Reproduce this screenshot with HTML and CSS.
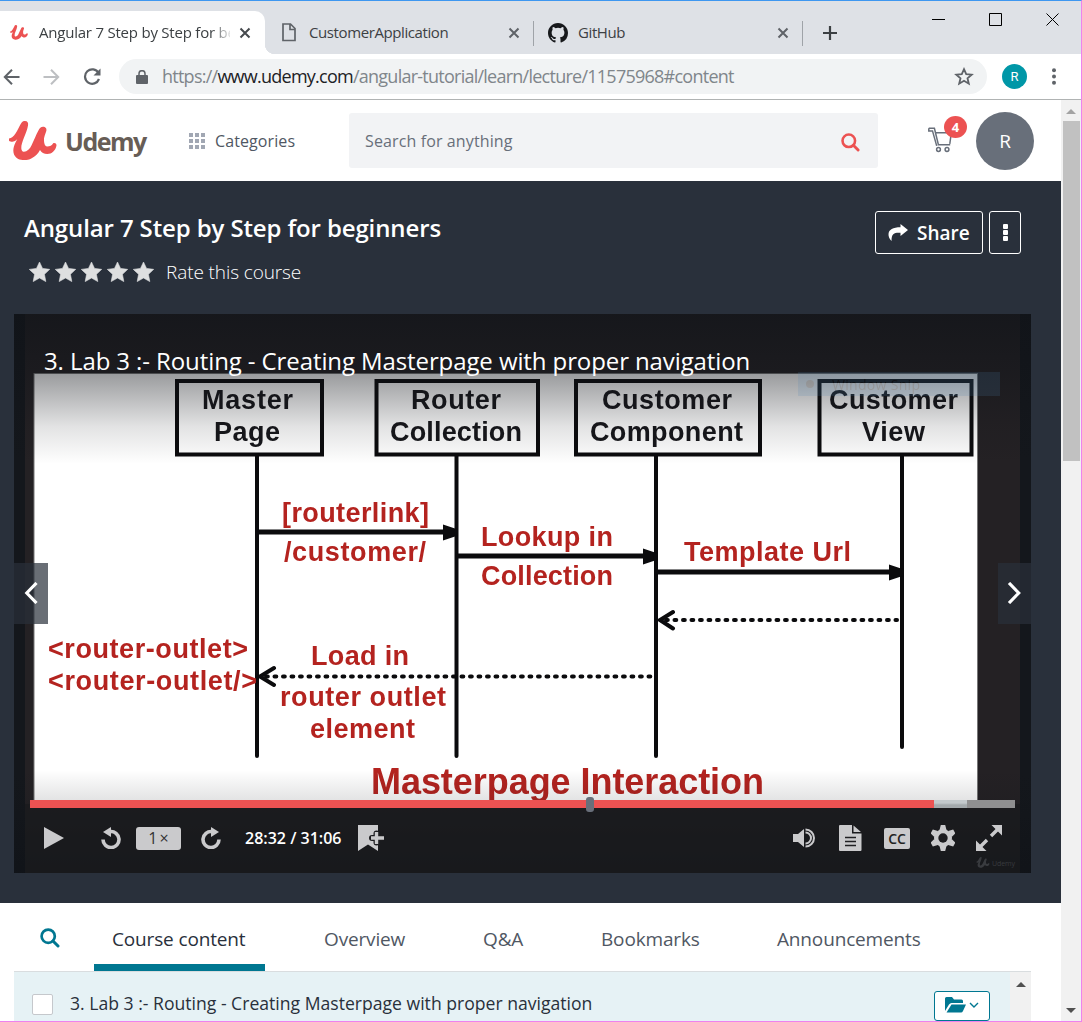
FILE: index.html
```html
<!DOCTYPE html>
<html lang="en">
<head>
<meta charset="utf-8">
<title>Angular 7 Step by Step for beginners</title>
<link rel="stylesheet" href="styles.css">
</head>
<body>
<svg class="defs" width="0" height="0">
  <symbol id="u-mark" viewBox="0 0 48 40">
    <path d="M0 17.500C5 17.500 8.500 9 11.700 3C13 .5 14.500 0 16 0C18.500 0 19.500 2 19 4.500C18 12 12 21 12.300 27.300C12.500 29.500 13.500 31 15 30.700C18 30.500 21 28 22.700 24C25 19 27 14 29.300 9.700C30.500 7 32 5.700 34 5.700C36.500 5.700 38 7.500 37.300 10C36.500 13 34.500 16 35 20C35.200 23 36 25.300 38 25.500C41 25.500 43 24.500 44 22.500C45 21.500 47.500 22 47.500 24.500C47 27 46 29 44.300 30.500C42.500 32.300 40.500 33 38.300 33C35 33 32.500 31.500 31 29C29 33 26 35.500 22.700 37.200C19.500 39 16.500 39.300 13.700 39C9 38.700 6.500 36.500 5 33.500C4 30.500 4.200 28 5 25.300C5.800 22.500 7.500 20 8.300 18C7 19.500 5.800 20.300 4.300 20.500C2 21 0 20.500 0 19.500Z" fill="currentColor"/>
  </symbol>
  <symbol id="close" viewBox="0 0 12 12"><path d="M1.500 1.500l9 9m0-9l-9 9" fill="none" stroke="currentColor" stroke-width="2"/></symbol>
  <symbol id="search" viewBox="0 0 20 20"><circle cx="8.200" cy="8.200" r="6.600" fill="none" stroke="currentColor" stroke-width="2.700"/><path d="M13 13L18 18" stroke="currentColor" stroke-width="3" stroke-linecap="round"/></symbol>
  <symbol id="star" viewBox="0 0 20 19"><path d="M10 0l2.900 6.100 6.800.9-5 4.700 1.300 6.900-6-3.400-6 3.400 1.300-6.900-5-4.700 6.800-.9z" fill="currentColor" stroke="currentColor" stroke-width=".6" stroke-linejoin="round"/></symbol>
</svg>

<div class="window">
  <header class="tabstrip">
    <div class="tab tab-active">
      <svg class="fav" width="18" height="15"><use href="#u-mark"/></svg>
      <span class="tab-text fade">Angular 7 Step by Step for be</span>
      <svg class="x" width="12" height="12"><use href="#close"/></svg>
    </div>
    <div class="tab tab-two">
      <svg width="14" height="19" viewBox="0 0 14 19" fill="none" stroke="#5f6368" stroke-width="1.700"><path d="M1 1h7.500L13 5.500V17.500H1zM8 1v5.500h5"/></svg>
      <span class="tab-text t2">CustomerApplication</span>
      <svg class="x" width="12" height="12"><use href="#close"/></svg>
    </div>
    <div class="tab tab-three">
      <svg width="20" height="20" viewBox="0 0 16 16"><path fill="#17191c" d="M8 0C3.580 0 0 3.580 0 8c0 3.540 2.290 6.530 5.470 7.590.4.070.55-.17.55-.38 0-.19-.01-.82-.01-1.490-2.010.37-2.530-.49-2.690-.94-.09-.23-.48-.94-.82-1.130-.28-.15-.68-.52-.01-.53.63-.01 1.080.58 1.230.82.72 1.210 1.870.87 2.330.66.070-.52.28-.87.51-1.070-1.780-.2-3.640-.89-3.640-3.950 0-.87.31-1.590.82-2.150-.08-.2-.36-1.020.08-2.120 0 0 .67-.21 2.200.82a7.500 7.500 0 014 0c1.530-1.040 2.200-.82 2.200-.82.44 1.100.16 1.920.08 2.120.51.56.82 1.270.82 2.150 0 3.070-1.870 3.750-3.650 3.950.29.25.54.73.54 1.480v2.200c0 .21.15.46.55.38A8 8 0 0016 8c0-4.420-3.580-8-8-8z"/></svg>
      <span class="tab-text t3">GitHub</span>
      <svg class="x" width="12" height="12"><use href="#close"/></svg>
    </div>
    <svg class="plus" width="16" height="16"><path d="M8 1v14M1 8h14" stroke="#3c4043" stroke-width="2.200"/></svg>
    <svg class="wincontrols" width="128" height="14" fill="none" stroke="#000" stroke-width="1"><path d="M0 6.500h13"/><path d="M57.500.5h12v12h-12zM114.500.5l12 12m0-12l-12 12" /></svg>
  </header>

  <div class="toolbar">
    <svg class="nav-back" width="17" height="16" fill="none" stroke="#5f6368" stroke-width="2"><path d="M16.500 8H2M9 .8L1.800 8 9 15.200"/></svg>
    <svg class="nav-fwd" width="17" height="16" fill="none" stroke="#bdbfc2" stroke-width="2"><path d="M.5 8H15M8 .8L15.200 8 8 15.200"/></svg>
    <svg class="nav-reload" width="18" height="18" fill="none" stroke="#5f6368" stroke-width="2.200"><path d="M15.500 5A7.200 7.200 0 1 0 16 11"/><path d="M17.500.5V7.500H10.500z" fill="#5f6368" stroke="none"/></svg>
    <div class="omnibox">
      <svg width="12" height="14" viewBox="0 0 12 14"><path d="M1 5h10a1 1 0 011 1v7a1 1 0 01-1 1H1a1 1 0 01-1-1V6a1 1 0 011-1z" fill="#5f6368"/><path d="M3 6V3.700a3 3 0 016 0V6" fill="none" stroke="#5f6368" stroke-width="1.500"/></svg>
      <span class="url">https://<b>www.udemy.com</b>/angular-tutorial/learn/lecture/11575968#content</span>
      <svg class="fav-star" width="20" height="19" viewBox="0 0 20 19"><path d="M10 2.200l2.200 5 5.500.5-4.200 3.600 1.300 5.400-4.800-2.900-4.800 2.900 1.300-5.400L2.300 7.700l5.500-.5z" fill="none" stroke="#5f6368" stroke-width="1.800"/></svg>
    </div>
    <span class="profile">R</span>
    <svg class="kebab" width="4" height="17" fill="#5f6368"><circle cx="2" cy="2.200" r="2"/><circle cx="2" cy="8.500" r="2"/><circle cx="2" cy="14.800" r="2"/></svg>
  </div>

  <div class="viewport">
    <main class="page">
      <div class="site-header">
        <svg class="logo-mark" width="48" height="40"><use href="#u-mark"/></svg>
        <span class="logo-text">Udemy</span>
        <div class="cat-grid"><i></i><i></i><i></i><i></i><i></i><i></i><i></i><i></i><i></i></div>
        <span class="categories">Categories</span>
        <div class="searchbox"><span>Search for anything</span><svg width="19" height="19" viewBox="0 0 20 20"><use href="#search"/></svg></div>
        <div class="cart">
          <svg width="26" height="26" fill="none" stroke="#686f7a" stroke-width="1.500"><path d="M.8 1.200h5.600l4 16.500h11.800M.8 1.200v2.700h3.700l4.200 15M7.300 5.800h16l-1.500 11"/><circle cx="10.500" cy="22.500" r="1.900"/><circle cx="19" cy="22.500" r="1.900"/></svg>
          <span class="badge">4</span>
        </div>
        <div class="avatar">R</div>
      </div>

      <section class="hero">
        <div class="hero-top">
          <div>
            <h1>Angular 7 Step by Step for beginners</h1>
            <div class="rating">
              <svg width="21" height="20"><use href="#star"/></svg><svg width="21" height="20"><use href="#star"/></svg><svg width="21" height="20"><use href="#star"/></svg><svg width="21" height="20"><use href="#star"/></svg><svg width="21" height="20"><use href="#star"/></svg>
              <span>Rate this course</span>
            </div>
          </div>
          <div class="hero-actions">
            <div class="btn share"><svg width="20" height="17" viewBox="0 0 20 17"><path d="M12.500 0L20 6l-7.500 6V8.800C7 8.500 3.300 9 3.600 17 1.500 15 .3 12.500.5 10 .8 5.500 5 3.200 12.500 3.200z" fill="#fff"/></svg><span>Share</span></div>
            <div class="btn more"><i></i><i></i><i></i></div>
          </div>
        </div>

        <div class="player">
          <svg class="slide" viewBox="14 314 1017 559" width="1017" height="559">
            <defs>
              <linearGradient id="shadeTop" x1="0" y1="0" x2="0" y2="1"><stop offset="0" stop-color="#101318" stop-opacity=".7"/><stop offset=".39" stop-color="#101318" stop-opacity=".43"/><stop offset=".75" stop-color="#101318" stop-opacity=".12"/><stop offset="1" stop-color="#101318" stop-opacity="0"/></linearGradient>
              <linearGradient id="shadeBottom" x1="0" y1="0" x2="0" y2="1"><stop offset="0" stop-color="#101318" stop-opacity="0"/><stop offset=".3" stop-color="#101318" stop-opacity=".12"/><stop offset="1" stop-color="#101318" stop-opacity=".8"/></linearGradient>
            </defs>
            <rect x="14" y="314" width="1017" height="559" fill="#14171c"/>
            <rect x="25" y="314" width="995" height="559" fill="#242124"/>
            <rect x="34" y="373.500" width="943.500" height="430" fill="#fff" stroke="#777" stroke-width="1"/>
            <g class="diagram">
              <g fill="none" stroke="#0b0b0d" stroke-width="4">
                <path d="M177 381h145v73.500H177zM376.500 381H538v73.500H376.500zM576 381h184v73.500H576zM819.500 381H971.500v73.500H819.500z"/>
                <path d="M257 455V756M456.500 455V756M656 455V756M902 455V747" stroke-linecap="round"/>
                <path d="M257 532h190M457 556h190M656 572h236" stroke-width="5"/>
                <path d="M266 676.500H655M666 620H897" stroke-dasharray="1.800 6.700" stroke-linecap="round"/>
                <path d="M274 668L260 676.500L274 685M673 612L660 620L673 628.500" stroke-linecap="round" />
              </g>
              <path d="M443 524.500l15 5v6l-15 5zM643 548.500l15 5v6l-15 5zM889 564.500l15 5v6l-15 5z" fill="#0b0b0d"/>
              <g class="dtext" fill="#16161a">
                <text x="202" y="409" textLength="91">Master</text><text x="214" y="441" textLength="66">Page</text>
                <text x="411" y="409" textLength="90">Router</text><text x="390" y="441" textLength="132">Collection</text>
                <text x="602" y="409" textLength="130">Customer</text><text x="590" y="441" textLength="153">Component</text>
                <text x="829" y="409" textLength="129">Customer</text><text x="862" y="441" textLength="63">View</text>
              </g>
              <g class="dtext" fill="#b4231f">
                <text x="282" y="521.500" textLength="147">[routerlink]</text><text x="284" y="561" textLength="142">/customer/</text>
                <text x="481" y="545.500" textLength="132">Lookup in</text><text x="481" y="585" textLength="132">Collection</text>
                <text x="684" y="561" textLength="167">Template Url</text>
                <text x="48" y="658" textLength="200">&lt;router-outlet&gt;</text><text x="48" y="690" textLength="209">&lt;router-outlet/&gt;</text>
                <text x="311" y="665" textLength="98">Load in</text><text x="280" y="706" textLength="166">router outlet</text><text x="310" y="738" textLength="105">element</text>
                <text class="dtitle" x="371" y="794" textLength="393">Masterpage Interaction</text>
              </g>
            </g>
            <rect x="14" y="314" width="1017" height="150" fill="url(#shadeTop)"/>
            <rect x="14" y="770" width="1017" height="103" fill="url(#shadeBottom)"/>
            <rect x="25" y="804" width="995" height="69" fill="#1a1b1e" opacity=".75"/>
            <g opacity=".16"><rect x="798" y="372" width="202" height="24" fill="#4f86b5"/><circle cx="810" cy="384" r="4" fill="#333"/><text class="snip" x="832" y="390" textLength="88" fill="#222">Window Snip</text></g>
            <g color="#393b3f"><use href="#u-mark" x="976" y="857" width="14" height="11"/><text x="992" y="866" class="mark" textLength="23" fill="#393b3f">Udemy</text></g>
          </svg>
          <div class="lecture-title">3. Lab 3 :- Routing - Creating Masterpage with proper navigation</div>
          <div class="skips">
            <div class="skip prev"><svg width="16" height="22" fill="none" stroke="#fff" stroke-width="3.200"><path d="M12.500 1L2.800 11l9.700 10"/></svg></div>
            <div class="skip next"><svg width="16" height="22" fill="none" stroke="#fff" stroke-width="3.200"><path d="M3 1l9.700 10L3 21"/></svg></div>
          </div>
          <div class="progress"><i class="played"></i><i class="buffered"></i><i class="rest"></i><b></b></div>
          <div class="controls">
            <svg class="play" width="20" height="22"><path d="M0 0l20 11L0 22z" fill="#cacacc"/></svg>
            <svg class="rewind" width="20" height="22" fill="none" stroke="#cacacc" stroke-width="3.600"><path d="M2 12.500A8 8 0 1 0 9 4.600"/><path d="M10 0v10L2 5z" fill="#cacacc" stroke="none"/></svg>
            <span class="speed">1<small>×</small></span>
            <svg class="forward" width="20" height="22" fill="none" stroke="#cacacc" stroke-width="3.600"><path d="M18 12.500A8 8 0 1 1 11 4.600"/><path d="M10 0v10l8-5z" fill="#cacacc" stroke="none"/></svg>
            <span class="time">28:32 / 31:06</span>
            <svg class="bookmark" width="27" height="26"><path d="M0 0h20v26l-10-6.500L0 26z" fill="#cacacc"/><path d="M18.500 8.500v9M14 13h10" stroke="#1c1c1f" stroke-width="6" stroke-linecap="round"/><path d="M18.500 7v12M13 13h13" stroke="#cacacc" stroke-width="3.400"/></svg>
            <span class="grow"></span>
            <svg class="volume" width="24" height="20"><path d="M0 6h5l6-5v18l-6-5H0z" fill="#cacacc"/><path d="M12.500 4.500a5.500 5.500 0 010 11M12.500 1.500a8.500 8.500 0 010 17" fill="none" stroke="#cacacc" stroke-width="2"/></svg>
            <svg class="transcript" width="23" height="26"><path d="M0 1a1 1 0 011-1h12v8.500h9.500V25a1 1 0 01-1 1H1a1 1 0 01-1-1zM14.500 0.500L22 7h-7.500z" fill="#cacacc"/><path d="M6 12.500h11M6 16.500h11M6 20.500h11" stroke="#202023" stroke-width="1.600"/></svg>
            <span class="cc">CC</span>
            <svg class="gear" width="24" height="26" viewBox="-12 -13 24 26"><g fill="#cacacc"><circle r="9"/><g id="teeth"><path d="M-3.500-8l1.300-5h4.400L3.500-8zM-3.500 8l1.300 5h4.400L3.500 8z"/></g><use href="#teeth" transform="rotate(60)"/><use href="#teeth" transform="rotate(120)"/></g><circle r="4.700" fill="#1d1d20"/></svg>
            <svg class="expand" width="26" height="26" fill="none" stroke="#cacacc" stroke-width="3.400"><path d="M15 11l7-7M11 15l-7 7"/><path d="M15.500 0H26v10.500zM0 15.500V26h10.500z" fill="#cacacc" stroke="none"/></svg>
          </div>
        </div>
      </section>

      <nav class="tabs">
        <svg class="tab-search" width="20" height="20"><use href="#search"/></svg>
        <span class="item current"><span class="n1">Course content</span></span>
        <span class="item i2"><span>Overview</span></span>
        <span class="item i3"><span>Q&amp;A</span></span>
        <span class="item i4"><span>Bookmarks</span></span>
        <span class="item i5"><span>Announcements</span></span>
      </nav>
      <div class="curriculum">
        <div class="lecture">
          <span class="check"></span>
          <span class="lecture-name">3. Lab 3 :- Routing - Creating Masterpage with proper navigation</span>
          <span class="resources"><svg width="36" height="18" viewBox="0 0 36 18"><path d="M0 15V2.500Q0 1 1.500 1H7l2 2.500h7.500q1.500 0 1.500 1.500v2H6.500Q5 7 4 8.500z" fill="#007791"/><path d="M6.500 8.500H21L18 15q-.7 1.500-2 1.500H1.500z" fill="#007791"/><path d="M25 7l4 4 4-4" fill="none" stroke="#007791" stroke-width="1.400"/></svg></span>
        </div>
        <div class="inner-scroll"><i></i></div>
      </div>
    </main>
    <aside class="scrollbar"><i class="up"></i><i class="thumb"></i><i class="down"></i></aside>
  </div>
</div>
</body>
</html>
```
FILE: styles.css
```css
* { box-sizing: border-box; }
body { margin: 0; font-family: "Open Sans", sans-serif; background: #fff; }
svg { display: block; flex: none; }
.defs { position: absolute; }
span, h1 { white-space: nowrap; }
.window { width: 1082px; height: 1022px; overflow: hidden; display: flex; flex-direction: column; border-top: 1px solid #3e97f0; border-right: 1px solid #ee82ee; border-bottom: 1px solid #ee82ee; }

/* Browser tabs */
.tabstrip { height: 53px; flex: none; background: #dee1e6; display: flex; align-items: flex-start; }
.tab { display: flex; align-items: center; height: 43px; margin-top: 10px; color: #3c4043; font-size: 15px; }
.tab .x { color: #5f6368; }
.tab-active { width: 265px; background: #fff; border-radius: 0 10px 0 0; padding-left: 10px; position: relative; }
.tab-active .x { color: #45494d; margin-left: 9px; }
.tab-active::after { content: ""; position: absolute; left: 265px; bottom: 0; width: 10px; height: 10px; background: radial-gradient(circle at 100% 0, #dee1e6 10px, #fff 10.500px); }
.fav { color: #ec5252; margin-right: 11px; }
.tab-text { overflow: hidden; letter-spacing: -.4px; padding-bottom: 2px; }
.fade { width: 191px; letter-spacing: -.22px; -webkit-mask-image: linear-gradient(90deg, #000 172px, transparent 194px); mask-image: linear-gradient(90deg, #000 172px, transparent 194px); }
.tab-two { width: 269px; padding-left: 17px; position: relative; }
.tab-two .t2 { margin-left: 13px; width: 199px; }
.tab-three { width: 269px; padding-left: 14px; position: relative; }
.tab-three .t3 { margin-left: 10px; width: 199px; }
.tab-two::after, .tab-three::after { content: ""; position: absolute; right: 0; top: 10px; width: 1px; height: 25px; background: #9fa3a8; }
.plus { margin: 24px 0 0 19px; }
.wincontrols { margin: 12px 21px 0 auto; }

/* Address bar */
.toolbar { height: 46px; flex: none; display: flex; align-items: center; border-bottom: 1px solid #b0b3b3; background: #fff; }
.nav-back { margin-left: 3px; }
.nav-fwd { margin-left: 23px; }
.nav-reload { margin-left: 23px; }
.omnibox { margin-left: 18px; width: 868px; height: 35px; border-radius: 18px; background: #f1f3f4; display: flex; align-items: center; padding: 0 13px 0 17px; margin-right: 15px; }
.url { margin-left: 14px; flex: 1; font-size: 18px; letter-spacing: -.75px; color: #80868b; padding-bottom: 1px; }
.url b { font-weight: 400; color: #202124; }
.profile { width: 25px; height: 25px; border-radius: 50%; background: #0097a7; color: #fff; font: 13px/26px Roboto, sans-serif; text-align: center; }
.kebab { margin-left: 25px; }

.viewport { flex: 1; display: flex; min-height: 0; }
.page { width: 1061px; background: #fff; overflow: hidden; }

/* Site header */
.site-header { height: 81px; display: flex; align-items: center; }
.logo-mark { margin-left: 9px; color: #ec5252; }
.logo-text { margin-left: 8px; width: 82px; font-weight: 700; font-size: 25px; letter-spacing: -1.500px; color: #675d56; }
.cat-grid { margin-left: 42px; width: 17px; display: grid; grid-template-columns: repeat(3, 4px); gap: 2px; }
.cat-grid i { height: 4px; background: #a1a7b3; }
.categories { width: 83px; margin-left: 9px; font-size: 16px; letter-spacing: .1px; color: #505763; }
.searchbox { width: 529px; height: 55px; margin-left: 51px; border-radius: 3px; background: #f2f3f5; color: #686f7a; font-size: 16px; letter-spacing: .12px; display: flex; align-items: center; justify-content: space-between; padding: 0 18px 0 16px; }
.searchbox svg { color: #ec5252; margin-top: 3px; }
.cart { width: 40px; height: 40px; margin-left: 50px; position: relative; padding-top: 6px; }
.badge { position: absolute; left: 16px; top: -5px; width: 23px; height: 22px; border-radius: 50%; background: #ec5252; color: #fff; font-weight: 700; font-size: 13px; line-height: 22px; text-align: center; }
.avatar { margin-left: 8px; width: 58px; height: 58px; border-radius: 50%; background: #686f7a; color: #fff; font-size: 19px; line-height: 58px; text-align: center; }

/* Course hero */
.hero { height: 722px; background: #29303b; }
.hero-top { height: 133px; display: flex; justify-content: space-between; padding: 30px 40px 0 24px; }
h1 { margin: 0; color: #fff; font-size: 24px; line-height: 34px; font-weight: 600; letter-spacing: -.12px; }
.rating { display: flex; align-items: center; gap: 5px; margin: 11px 0 0 5px; color: #dedfe0; height: 32px; }
.rating span { margin-left: 7px; color: #fff; font-weight: 300; font-size: 19px; line-height: 30px; letter-spacing: -.1px; }
.hero-actions { display: flex; gap: 6px; }
.btn { height: 43px; border: 1px solid #fff; border-radius: 3px; display: flex; align-items: center; color: #fff; font-weight: 600; font-size: 19px; }
.share { width: 108px; padding-left: 12px; gap: 9px; }
.more { width: 32px; flex-direction: column; justify-content: center; gap: 1px; }
.more i { width: 5px; height: 5px; border-radius: 1px; background: #fff; }

/* Video player */
.player { position: relative; margin-left: 14px; width: 1017px; height: 559px; display: flex; flex-direction: column; }
.slide { position: absolute; left: 0; top: 0; }
.diagram { filter: blur(.5px); }
.dtext { font: bold 27px "Liberation Sans", Arial, sans-serif; }
.dtitle { font-size: 36px; }
.snip { font-size: 14px; }
.mark { font-size: 7px; }
.player > div { position: relative; }
.lecture-title { height: 64px; padding: 30px 0 0 30px; color: #fff; font-size: 24px; line-height: 34px; letter-spacing: -.1px; white-space: nowrap; }
.skips { margin-top: 185px; display: flex; justify-content: space-between; }
.skip { height: 61px; display: flex; align-items: center; background: rgba(41, 48, 59, .7); }
.prev { width: 34px; padding-left: 10px; }
.next { width: 33px; padding-left: 8px; }
.skip svg { margin-top: -1px; }
.progress { margin: 176px 16px 0; height: 8px; display: flex; }
.progress i { height: 8px; }
.played { width: 904px; background: #ec5252; }
.buffered { width: 33px; background: linear-gradient(#c3c9cc 3px, #a3a9ac 5px); }
.rest { flex: 1; background: #8f8f90; }
.progress b { position: absolute; left: 556px; top: -3px; width: 8px; height: 15px; border-radius: 3px; background: #686f7a; }
.controls { flex: 1; display: flex; align-items: center; padding: 0 29px 5px 30px; color: #fff; }
.rewind { margin-left: 37px; }
.speed { margin-left: 15px; width: 45px; height: 23px; border-radius: 3px; background: #cacacc; color: #333; font-size: 16px; line-height: 23px; text-align: center; }
.speed small { font-size: 16px; margin-left: 2px; }
.forward { margin-left: 20px; }
.time { margin-left: 24px; width: 98px; font-size: 16px; font-weight: 600; }
.bookmark { margin-left: 15px; }
.grow { flex: 1; }
.transcript { margin-left: 22px; }
.cc { margin-left: 22px; width: 26px; height: 21px; border-radius: 2px; background: #cacacc; color: #222; font-size: 14px; font-weight: 600; line-height: 21px; text-align: center; }
.gear { margin-left: 21px; }
.expand { margin-left: 21px; }

/* Course tabs */
.tabs { height: 68px; display: flex; align-items: stretch; font-size: 19px; color: #505763; letter-spacing: -.15px; }
.tab-search { margin: 25px 34px 0 40px; color: #007791; }
.item { padding-top: 24px; line-height: 25px; }
.current { width: 171px; padding-left: 18px; color: #29303b; border-bottom: 7px solid #007791; }
.i2 { margin-left: 59px; width: 159px; }
.i3 { width: 118px; }
.i4 { width: 176px; }

.curriculum { margin: 0 30px 0 14px; height: 52px; border-top: 1px solid #d9dddf; display: flex; }
.lecture { width: 996px; background: #e6f2f5; display: flex; padding-left: 18px; }
.lecture > * { flex: none; }
.check { margin-top: 22px; width: 21px; height: 21px; border: 1px solid #c5c8cc; border-radius: 2px; background: #fff; }
.lecture-name { margin: 19px 0 0 17px; width: 520px; font-size: 17.600px; line-height: 25px; color: #29303b; }
.resources { margin: 19px 0 0 344px; width: 56px; height: 30px; border: 1px solid #007791; border-radius: 3px; background: #fff; padding: 4px 0 0 10px; }
.inner-scroll { flex: 1; background: #f1f1f1; padding: 10px 0 0 6px; }
.inner-scroll i { display: block; border: 5px solid transparent; border-top: 0; border-bottom-color: #505050; width: 0; }

.scrollbar { width: 20px; background: #f1f1f1; display: flex; flex-direction: column; align-items: center; }
.up { margin-top: 9px; border: 5px solid transparent; border-top: 0; border-bottom-color: #a3a3a3; }
.thumb { margin-top: 7px; width: 17px; height: 340px; background: #c1c1c1; }
.down { margin-top: auto; margin-bottom: 8px; border: 5px solid transparent; border-bottom: 0; border-top-color: #505050; }
```
